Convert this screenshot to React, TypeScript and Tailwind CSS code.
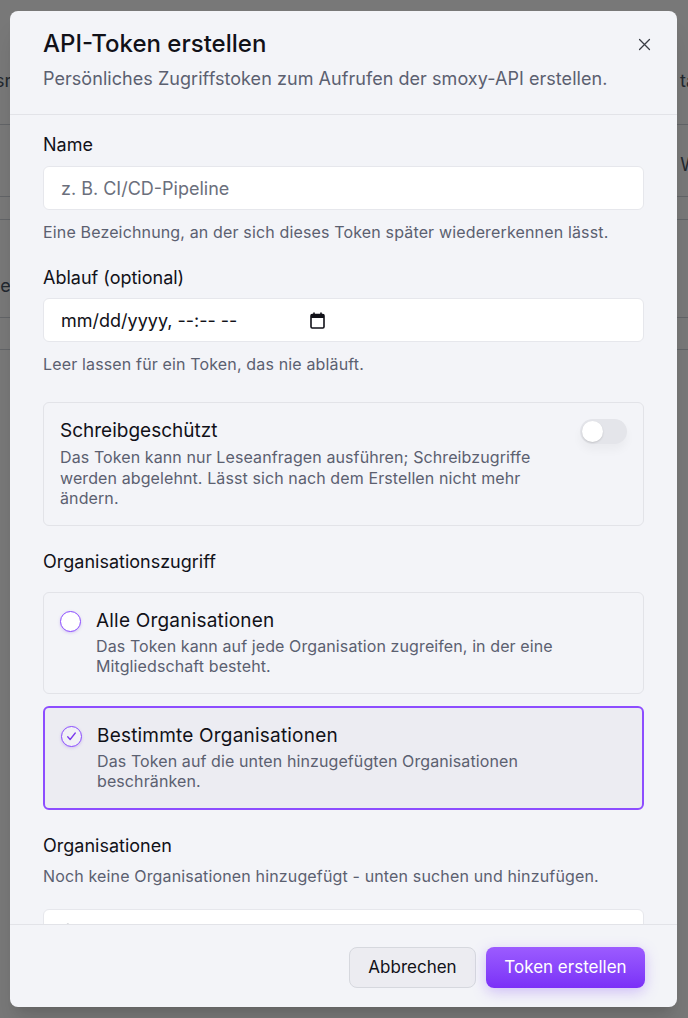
import React from "react";

function Radio({ checked }: { checked: boolean }) {
  return (
    <div
      className={`mt-[4px] flex h-[21px] w-[21px] shrink-0 items-center justify-center rounded-full border-[1.8px] border-[#8b4dff] shadow-[0_1px_3px_rgba(124,58,237,0.25)] ${checked ? "bg-[#f1f1f6]" : "bg-white"}`}
    >
      {checked && (
        <svg width="13" height="13" viewBox="0 0 24 24" fill="none" stroke="#7c3aed" strokeWidth="2.4" strokeLinecap="round" strokeLinejoin="round">
          <path d="M5 12.5l4.5 5L19 5.5" />
        </svg>
      )}
    </div>
  );
}

export default function App() {
  return (
    <div className="relative h-[1018px] w-[688px] overflow-hidden bg-white" style={{ fontFamily: "Inter, 'Noto Sans', sans-serif" }}>
      {/* background page */}
      <div className="flex flex-col text-[18px] text-gray-600">
        <div className="flex h-[125px] items-start justify-between border-b border-gray-300 pt-[67px]">
          <span className="-ml-[5px]">sm</span>
          <span className="-mr-[8px]">ta</span>
        </div>
        <div className="flex h-[72px] items-start justify-end border-b border-gray-300 pt-[26px]">
          <span className="-mr-[10px]">W</span>
        </div>
        <div className="h-[23px] border-b border-gray-300" />
        <div className="flex h-[98px] items-start border-b border-gray-300 pt-[52px]">
          <span className="-ml-[4px]">le</span>
        </div>
        <div className="h-[32px] border-b border-gray-300" />
      </div>
      {/* overlay */}
      <div className="absolute inset-0 bg-black/[0.53]" />
      {/* dialog */}
      <div className="absolute left-[10px] top-[11px] flex h-[996px] w-[667px] flex-col overflow-hidden rounded-[8px] bg-[#f3f4f8] shadow-xl">
        {/* header */}
        <div className="relative border-b-[1.5px] border-[#e2e3e8] px-[33px] pb-[21px] pt-[17px]">
          <h2 className="text-[24px] font-medium leading-[32px] text-[#111118]">API-Token erstellen</h2>
          <p className="mt-[5px] text-[18px] leading-[28px] tracking-[0.05px] text-[#5b6070]">
            Persönliches Zugriffstoken zum Aufrufen der smoxy-API erstellen.
          </p>
          <button className="absolute right-[24px] top-[25px] text-[#3a3d45]">
            <svg width="17" height="17" viewBox="0 0 24 24" fill="none" stroke="currentColor" strokeWidth="1.8" strokeLinecap="round">
              <path d="M5 5l14 14M19 5L5 19" />
            </svg>
          </button>
        </div>

        {/* body */}
        <div className="flex-1 overflow-hidden px-[33px] pt-[16px]">
          <label className="block text-[18px] font-normal leading-[28px] text-[#111118]">Name</label>
          <input
            className="mt-[7px] block h-[44px] w-full rounded-[6px] border border-[#e6e7ec] bg-white px-[17px] text-[18px] text-[#111118] placeholder:text-[#6b6f7c] outline-none"
            placeholder="z. B. CI/CD-Pipeline"
          />
          <p className="mt-[10px] text-[16px] leading-[24px] tracking-[0.15px] text-[#5b6070]">
            Eine Bezeichnung, an der sich dieses Token später wiedererkennen lässt.
          </p>

          <label className="mt-[20px] block text-[18px] font-normal leading-[28px] text-[#111118]">Ablauf (optional)</label>
          <div className="mt-[6px] flex h-[44px] w-full items-center rounded-[6px] border border-[#e6e7ec] bg-white px-[17px] text-[18px] text-[#111118]">
            <span>mm/dd/yyyy, --:-- --</span>
            <svg className="ml-[73px]" width="15" height="17" viewBox="0 0 15 17" fill="none">
              <rect x="1" y="2.5" width="13" height="13.5" rx="1.2" stroke="#111118" strokeWidth="1.6" />
              <rect x="1" y="2.5" width="13" height="3.5" fill="#111118" />
              <path d="M4 0.5v3M11 0.5v3" stroke="#111118" strokeWidth="1.6" />
            </svg>
          </div>
          <p className="mt-[10px] text-[16px] leading-[24px] tracking-[0.15px] text-[#5b6070]">Leer lassen für ein Token, das nie abläuft.</p>

          {/* read only card */}
          <div className="mt-[26px] flex gap-[16px] rounded-[6px] border-[1.5px] border-[#e2e3e8] px-[16px] pb-[16px] pt-[14px]">
            <div className="flex-1">
              <div className="text-[19px] font-normal leading-[28px] text-[#111118]">Schreibgeschützt</div>
              <p className="mt-[2px] text-[16px] leading-[20.5px] tracking-[0.1px] text-[#5b6070]">
                Das Token kann nur Leseanfragen ausführen; Schreibzugriffe werden abgelehnt. Lässt sich nach dem Erstellen nicht mehr ändern.
              </p>
            </div>
            <div className="mt-[2px] flex h-[25px] w-[47px] shrink-0 items-center rounded-full bg-[#e4e5ea] px-[2px] shadow-[0_6px_10px_rgba(0,0,0,0.04)]">
              <div className="h-[21px] w-[21px] rounded-full bg-white shadow-[0_1px_2px_rgba(0,0,0,0.15)]" />
            </div>
          </div>

          <div className="mt-[22px] text-[18px] font-normal leading-[28px] text-[#111118]">Organisationszugriff</div>

          <div className="mt-[16px] flex gap-[15px] rounded-[6px] border-[1.5px] border-[#e2e3e8] px-[16px] pb-[16px] pt-[14px]">
            <Radio checked={false} />
            <div className="flex-1">
              <div className="text-[19px] font-normal leading-[28px] tracking-[0.2px] text-[#111118]">Alle Organisationen</div>
              <p className="mt-[1px] text-[16px] leading-[20.5px] tracking-[0.1px] text-[#5b6070]">
                Das Token kann auf jede Organisation zugreifen, in der eine Mitgliedschaft besteht.
              </p>
            </div>
          </div>

          <div className="mt-[12px] flex gap-[15px] rounded-[6px] border-2 border-[#8d4dff] bg-[#ececf2] px-[16px] pb-[16px] pt-[14px]">
            <Radio checked={true} />
            <div className="flex-1 pr-[100px]">
              <div className="text-[19px] font-normal leading-[28px] tracking-[0.2px] text-[#111118]">Bestimmte Organisationen</div>
              <p className="mt-[1px] text-[16px] leading-[20.5px] tracking-[0.1px] text-[#5b6070]">
                Das Token auf die unten hinzugefügten Organisationen beschränken.
              </p>
            </div>
          </div>

          <div className="mt-[22px] text-[18px] font-normal leading-[28px] text-[#111118]">Organisationen</div>
          <p className="mt-[4px] text-[16px] leading-[24px] tracking-[0.15px] text-[#5b6070]">
            Noch keine Organisationen hinzugefügt - unten suchen und hinzufügen.
          </p>
          <div className="mt-[21px] flex h-[44px] items-start rounded-[6px] border border-[#e6e7ec] bg-white px-[17px] pt-[12px]">
            <svg width="15" height="15" viewBox="0 0 24 24" fill="none" stroke="#4b5060" strokeWidth="2.2" strokeLinecap="round">
              <circle cx="11" cy="11" r="7" />
              <path d="M20 20l-4-4" />
            </svg>
          </div>
        </div>

        {/* footer */}
        <div className="flex justify-end gap-[10px] border-t-[1.5px] border-[#e2e3e8] px-[32px] pb-[19px] pt-[22px]">
          <button className="h-[41px] w-[127px] rounded-[8px] border-[1.5px] border-[#d6d8de] bg-[#ececf1] text-[17px] font-normal text-[#111118]">
            Abbrechen
          </button>
          <button className="h-[41px] w-[159px] rounded-[8px] bg-gradient-to-b from-[#9c5bff] to-[#7b2ff7] text-[17px] font-normal text-white shadow-[0_4px_14px_rgba(139,92,246,0.35)]">
            Token erstellen
          </button>
        </div>
      </div>
    </div>
  );
}
